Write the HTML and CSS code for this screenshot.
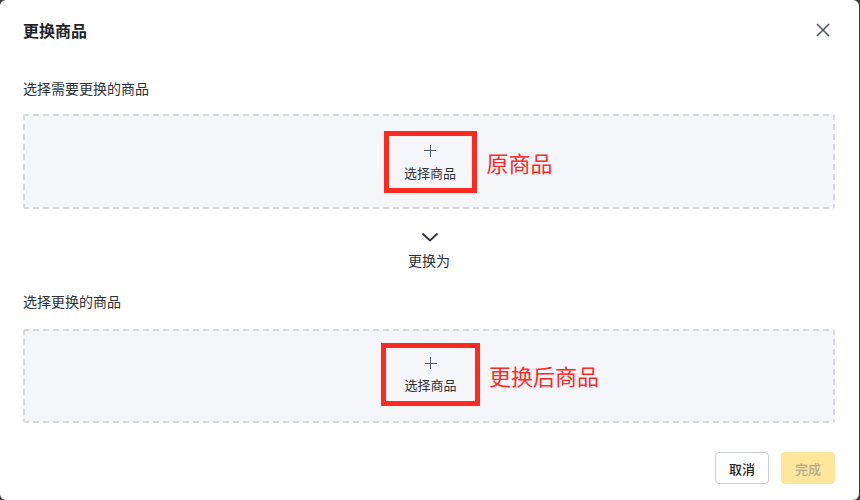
FILE: index.html
```html
<!DOCTYPE html>
<html lang="zh-CN">
<head>
    <meta charset="UTF-8">
    <meta name="viewport" content="width=device-width, initial-scale=1.0">
    <title>更换商品</title>
    <link rel="stylesheet" href="styles.css">
</head>
<body>
    <div class="dialog">
        <div class="dialog-header">
            <h2 class="dialog-title">更换商品</h2>
            <button class="close-btn" aria-label="关闭">
                <svg width="16" height="16" viewBox="0 0 16 16">
                    <path d="M2 2 L14 14 M14 2 L2 14" stroke="#4e5969" stroke-width="1.6" fill="none"/>
                </svg>
            </button>
        </div>

        <div class="field-label">选择需要更换的商品</div>
        <div class="picker-box">
            <div class="picker mark-a">
                <span class="plus"></span>
                <span class="picker-text">选择商品</span>
                <span class="note">原商品</span>
            </div>
        </div>

        <div class="swap">
            <svg width="18" height="10" viewBox="0 0 18 10">
                <path d="M1.5 1.5 L9 8.5 L16.5 1.5" stroke="#2b2f36" stroke-width="1.8" fill="none"/>
            </svg>
            <span class="swap-text">更换为</span>
        </div>

        <div class="field-label field-label-2">选择更换的商品</div>
        <div class="picker-box picker-box-2">
            <div class="picker mark-b">
                <span class="plus"></span>
                <span class="picker-text">选择商品</span>
                <span class="note">更换后商品</span>
            </div>
        </div>

        <div class="dialog-footer">
            <button class="btn btn-cancel">取消</button>
            <button class="btn btn-done" disabled>完成</button>
        </div>
    </div>
</body>
</html>
```

FILE: styles.css
```css
* {
    box-sizing: border-box;
}

body {
    margin: 0;
    background: #3c3c3c;
    font-family: "Noto Sans CJK SC", "Noto Sans", sans-serif;
    color: #1f2329;
}

.dialog {
    width: 859px;
    height: 500px;
    background: #fff;
    border-radius: 6px;
    padding: 0 24px 0 23px;
}

.dialog-header {
    height: 60px;
    display: flex;
    align-items: center;
    justify-content: space-between;
}

.dialog-title {
    margin: 0;
    font-size: 16px;
    font-weight: 700;
    line-height: 22px;
}

.close-btn {
    border: none;
    background: none;
    padding: 0;
    margin-right: 4px;
    width: 16px;
    height: 16px;
    display: flex;
}

.field-label {
    margin-top: 18px;
    font-size: 14px;
    line-height: 20px;
    color: #2b2f36;
}

.field-label-2 {
    margin-top: 21px;
}

/* dashed frame drawn with gradients so the dashes come out longer than the default */
.picker-box {
    margin-top: 16px;
    height: 95px;
    border-radius: 3px;
    background:
        repeating-linear-gradient(90deg, #d4d7df 0 6px, transparent 6px 10px) left top / 100% 2px no-repeat,
        repeating-linear-gradient(90deg, #d4d7df 0 6px, transparent 6px 10px) left bottom / 100% 2px no-repeat,
        repeating-linear-gradient(180deg, #d4d7df 0 6px, transparent 6px 10px) left top / 2px 100% no-repeat,
        repeating-linear-gradient(180deg, #d4d7df 0 6px, transparent 6px 10px) right top / 2px 100% no-repeat,
        #f5f6fa;
    display: flex;
    align-items: center;
    justify-content: center;
}

.picker-box-2 {
    margin-top: 18px;
    height: 94px;
}

.picker {
    position: relative;
    height: 62px;
    border: 5px solid #ff2a1f;
    display: flex;
    flex-direction: column;
    align-items: center;
    padding-top: 9px;
}

.mark-a {
    width: 93px;
    margin-left: 2px;
}

.mark-b {
    width: 99px;
    height: 63px;
    margin-left: 3px;
    margin-bottom: 3px;
}

.plus {
    position: relative;
    width: 12px;
    height: 12px;
}

.plus::before,
.plus::after {
    content: "";
    position: absolute;
    background: #4e5969;
}

.plus::before {
    left: 0;
    right: 0;
    top: 5.5px;
    height: 1.2px;
}

.plus::after {
    top: 0;
    bottom: 0;
    left: 5.5px;
    width: 1.2px;
}

.picker-text {
    margin-top: 7px;
    font-size: 13px;
    line-height: 18px;
    color: #2b2f36;
}

/* red callout next to the picker */
.note {
    position: absolute;
    left: 100%;
    top: 50%;
    transform: translateY(-50%);
    margin-left: 15px;
    white-space: nowrap;
    font-size: 22px;
    line-height: 28px;
    color: #ff2a26;
}

.mark-b .note {
    margin-left: 14px;
}

.swap {
    margin-top: 23px;
    display: flex;
    flex-direction: column;
    align-items: center;
}

.swap svg {
    display: block;
    margin-left: 2px;
}

.swap-text {
    margin-top: 8px;
    font-size: 14px;
    line-height: 20px;
    color: #2b2f36;
}

.dialog-footer {
    margin-top: 29px;
    display: flex;
    justify-content: flex-end;
    gap: 12px;
}

.btn {
    width: 54px;
    height: 32px;
    border-radius: 4px;
    font-family: inherit;
    font-size: 13px;
    font-weight: 500;
    padding: 0;
}

.btn-cancel {
    background: #fff;
    border: 1px solid #c9cdd4;
    color: #1f2329;
}

.btn-done {
    background: #fde59b;
    border: 1px solid #fde59b;
    color: #b3aa8e;
}
```
